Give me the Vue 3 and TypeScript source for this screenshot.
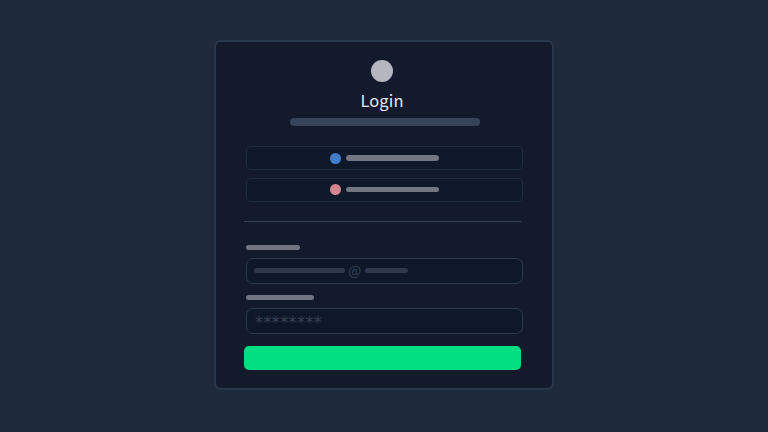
<script setup lang="ts">
interface Provider {
  name: string
}

const providers: Provider[] = [{ name: 'blue' }, { name: 'pink' }]
const mask: string = '*'.repeat(8)
</script>

<template>
  <main class="page">
    <section class="card">
      <header class="head">
        <div class="avatar"></div>
        <h1 class="title">Login</h1>
        <div class="subtitle"></div>
      </header>

      <div class="providers">
        <button v-for="p in providers" :key="p.name" class="provider" :class="`${p.name}-row`" type="button">
          <span class="dot" :class="p.name"></span>
          <span class="line"></span>
        </button>
      </div>

      <div class="divider"></div>

      <form class="form" @submit.prevent>
        <div class="label email"></div>
        <div class="field">
          <span class="ghost user"></span>
          <span class="at">@</span>
          <span class="ghost domain"></span>
        </div>
        <div class="label password"></div>
        <div class="field">
          <span class="mask">{{ mask }}</span>
        </div>
        <button class="submit" type="submit"></button>
      </form>
    </section>
  </main>
</template>

<style>
body {
  margin: 0;
  background: #1e2a3c;
}
</style>

<style scoped>
.page {
  box-sizing: border-box;
  height: 432px;
  padding-top: 40px;
  background: #1e2a3c;
  font-family: "Noto Sans CJK SC", "Open Sans", sans-serif;
}

.card {
  box-sizing: border-box;
  width: 340px;
  height: 350px;
  margin: 0 auto;
  padding: 18px 30px 0 30px;
  border: 2px solid #2a384d;
  border-radius: 7px;
  background: #121a2b;
}

.head {
  display: flex;
  flex-direction: column;
  align-items: center;
  width: 272px;
}

.avatar {
  width: 22px;
  height: 22px;
  border-radius: 50%;
  background: #b4b7bf;
}

.title {
  margin: 6px 0 6px;
  font-size: 16.5px;
  font-weight: 400;
  line-height: 24px;
  letter-spacing: 0.1px;
  color: #e2e8f0;
}

.subtitle {
  width: 190px;
  height: 7.5px;
  margin-left: 6px;
  border-radius: 4px;
  background: #364359;
}

.providers {
  display: flex;
  flex-direction: column;
  gap: 8px;
  margin-top: 20.5px;
}

.provider {
  box-sizing: border-box;
  display: flex;
  align-items: center;
  width: 277px;
  height: 24px;
  padding: 0 0 0 83px;
  border: 1px solid #1f2c3d;
  border-radius: 5px;
  background: #0f1829;
}

.pink-row {
  padding-bottom: 1px;
}

.dot {
  width: 11px;
  height: 11px;
  border-radius: 50%;
}

.blue {
  background: #417fcb;
}

.pink {
  background: #d3868f;
}

.line {
  width: 92.5px;
  height: 5.5px;
  margin-left: 5px;
  border-radius: 3px;
  background: #727683;
}

.divider {
  width: 277px;
  height: 1px;
  margin: 19px 0 0 -2px;
  background: #334155;
}

.form {
  display: flex;
  flex-direction: column;
  margin-top: 23px;
}

.label {
  height: 5.3px;
  border-radius: 2.5px;
  background: #727683;
}

.email {
  width: 54px;
}

.password {
  width: 68px;
  margin-top: 10.7px;
}

.field {
  box-sizing: border-box;
  display: flex;
  align-items: center;
  width: 276.5px;
  height: 25.5px;
  margin-top: 8.2px;
  padding-left: 7px;
  border: 1px solid #2b3b50;
  border-radius: 7px;
  background: #0f1829;
}

.ghost {
  height: 5px;
  margin-bottom: 1.5px;
  border-radius: 2.5px;
  background: #2f394b;
}

.user {
  width: 90.5px;
}

.domain {
  width: 43.5px;
}

.at {
  width: 20px;
  margin-bottom: 3px;
  font-size: 14px;
  line-height: 16px;
  text-align: center;
  color: #334155;
}

.mask {
  margin-top: 5px;
  padding-left: 1px;
  font-family: "DejaVu Sans", sans-serif;
  font-size: 16px;
  line-height: 18px;
  letter-spacing: 0.4px;
  color: #364254;
}

.submit {
  width: 276.5px;
  height: 23.5px;
  margin: 12.5px 0 0 -2px;
  padding: 0;
  border: 0;
  border-radius: 5px;
  background: #02df82;
}
</style>
